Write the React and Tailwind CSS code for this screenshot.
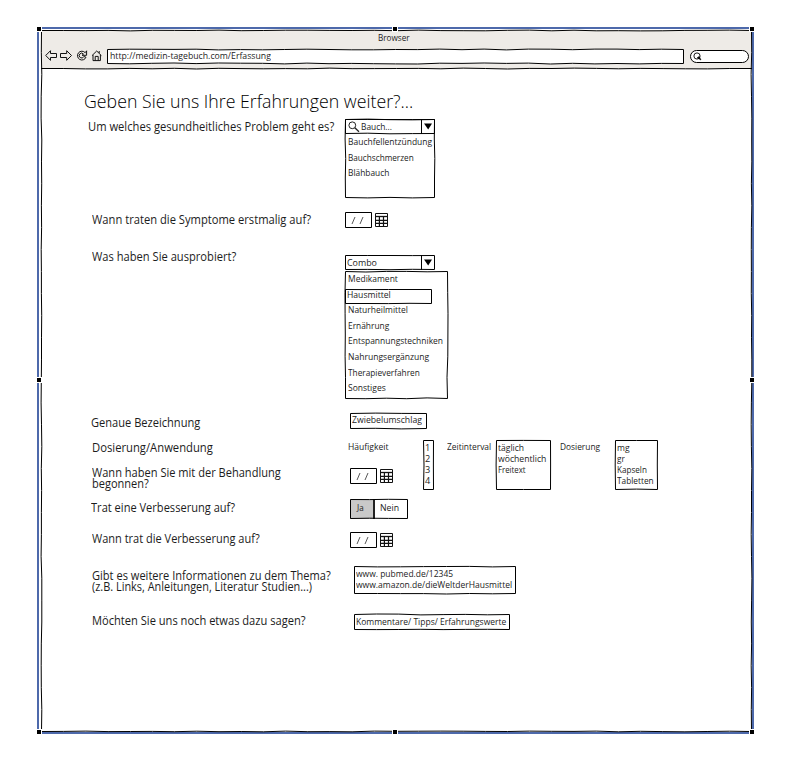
import React, { useLayoutEffect, useRef, useState } from "react";

/* Text condensed or widened so that it fills the width w. */
function T({ w, className = "", children }) {
  const ref = useRef(null);
  const [scale, setScale] = useState(1);
  useLayoutEffect(() => {
    setScale(w / ref.current.offsetWidth);
  }, []);
  return (
    <div className={`whitespace-pre ${className}`}>
      <span ref={ref} className="inline-block origin-left" style={{ transform: `scaleX(${scale})`, marginRight: w - w / scale }}>{children}</span>
    </div>
  );
}

function makeRandom(seed) {
  let s = seed * 7919 + 13;
  return () => {
    s = (s * 16807) % 2147483647;
    return s / 2147483647;
  };
}

function wobble(x1, y1, x2, y2, rnd, amp) {
  const len = Math.hypot(x2 - x1, y2 - y1);
  const n = Math.max(1, Math.round(len / 22));
  const vertical = x1 === x2;
  let d = `M${x1} ${y1}`;
  for (let i = 1; i <= n; i++) {
    const o = i === n ? 0 : (rnd() - 0.5) * 2 * amp;
    const x = x1 + ((x2 - x1) * i) / n + (vertical ? o : 0);
    const y = y1 + ((y2 - y1) * i) / n + (vertical ? 0 : o);
    d += `L${x.toFixed(1)} ${y.toFixed(1)}`;
  }
  return d;
}

/* Hand-drawn outline laid over its parent box. */
function Sketch({ w, h, seed = 1, amp = 0.6 }) {
  const r = makeRandom(seed);
  const a = 0.5;
  const d = [
    wobble(a, a, w - a, a, r, amp),
    wobble(w - a, a, w - a, h - a, r, amp),
    wobble(a, h - a, w - a, h - a, r, amp),
    wobble(a, a, a, h - a, r, amp),
  ].join("");
  return (
    <svg className="pointer-events-none absolute left-0 top-0 overflow-visible" width={w} height={h} fill="none" stroke="#000" strokeWidth="1">
      <path d={d} />
    </svg>
  );
}

function Calendar() {
  return (
    <svg width="13" height="14" viewBox="0 0 13 14" fill="none" stroke="#111">
      <path d="M0.5 13.5V0.5H12.5M0.5 13.5H12.5V0.5" />
      <path d="M0.5 3.5H12.5" strokeWidth="1.3" />
      <path d="M0.5 7.3H12.5M0.5 10.4H12.5M4.4 3.5V13.5M8.5 3.5V13.5" strokeWidth="1.2" />
    </svg>
  );
}

function DateField({ seed }) {
  return (
    <div className="flex items-center gap-[3px]">
      <div className="relative flex h-4 w-[27px] items-center justify-center pr-[2px]">
        <svg width="13" height="9" fill="none" stroke="#444" strokeWidth="0.9">
          <path d="M1 8L4 1M9 8L12 1" />
        </svg>
        <Sketch w={27} h={16} seed={seed} amp={0.3} />
      </div>
      <Calendar />
    </div>
  );
}

function Arrow() {
  return (
    <div className="flex h-full w-[14px] items-center justify-center border-l border-black pr-px">
      <svg width="8" height="7"><path d="M0 0.5H8L4.2 6.5Z" fill="#000" /></svg>
    </div>
  );
}

const small = "text-[9.2px] leading-[11px]";
const label = "text-[12px] leading-[11px]";

function Handle({ className }) {
  return <div className={`absolute size-[6px] border border-white bg-black ${className}`} />;
}

function Header() {
  return (
    <div className="relative flex h-[39px] flex-col bg-[#eeebe7]">
      <div className={`flex h-[19px] justify-center pt-[2px] ${small}`}>
        <T w={32} className="pr-[6px]">Browser</T>
      </div>
      <div className="flex h-[15px] items-center pl-[4px]">
        <svg width="58" height="13" viewBox="0 0 58 13" fill="none" stroke="#111" strokeWidth="1">
          <path d="M0.7 5.5L5.5 0.7V3.5H11.5V7.5H5.5V10.3Z" />
          <path d="M26.5 5.5L21.7 0.7V3.5H15.5V7.5H21.7V10.3Z" />
          <path d="M40.2 2.7A4.4 4.4 0 1 0 41 7.2L38.8 6.5A2.4 2.4 0 1 1 38.5 4.1L37 5.3H41.6V0.8Z" />
          <path d="M47 5.6L51.7 1L56.4 5.6M48 5V10.6H55.4V5M50.2 10.6V6.4H53.2V10.6M54.2 1V3" />
        </svg>
        <div className={`relative ml-[4px] flex h-[15px] w-[577px] items-center bg-white pb-[3px] pl-[3px] ${small}`}>
          <T w={161}>http://medizin-tagebuch.com/Erfassung</T>
          <Sketch w={577} h={15} seed={4} amp={0.5} />
        </div>
        <div className="ml-[6px] flex h-[13px] w-[59px] items-center rounded-full border border-black bg-white pl-[2px]">
          <svg width="9" height="9" fill="none" stroke="#000">
            <circle cx="4" cy="4" r="3.1" strokeWidth="0.9" />
            <path d="M4.2 5.8L6.2 4.5L8 8Z" fill="#000" strokeWidth="0.6" />
          </svg>
        </div>
      </div>
      <svg className="absolute left-0 top-[37px] overflow-visible" width="711" height="3" fill="none" stroke="#000">
        <path d={wobble(0, 1.5, 711, 1.5, makeRandom(8), 0.5)} />
      </svg>
    </div>
  );
}

function Choices({ width, box, items, seed }) {
  return (
    <div className={`relative h-[50px] pl-[2px] pt-[2px] ${box} ${small}`}>
      {items.map(([t, w]) => <T key={t} w={w}>{t}</T>)}
      <Sketch w={width} h={50} seed={seed} amp={0.5} />
    </div>
  );
}

const methods = [
  ["Naturheilmittel", 60], ["Ernährung", 41], ["Entspannungstechniken", 95],
  ["Nahrungsergänzung", 81], ["Therapieverfahren", 72], ["Sonstiges", 38],
];

export default function App() {
  return (
    <div className="h-[762px] w-[791px] overflow-hidden bg-white pl-[37px] pt-[27px] font-['Open_Sans','Noto_Sans',sans-serif] text-[#1c1c1c]">
      <div className="relative h-[707px] w-[717px] border-2 border-[#4d69ab] pl-[2px] pt-px">
        <div className="relative h-[702px] w-[711px]">
          <Header />
          <div className="pl-[43px] pt-[22px]">
            <T w={329} className="h-[28px] text-[18.5px] font-light leading-[20px] text-black">Geben Sie uns Ihre Erfahrungen weiter?...</T>

            <div className="flex h-[93px]">
              <div className={`w-[261px] pl-[4px] pt-[2px] ${label}`}>
                <T w={246}>Um welches gesundheitliches Problem geht es?</T>
              </div>
              <div className={`relative h-[79px] w-[90px] ${small}`}>
                <div className="relative flex h-[15px] items-center">
                  <svg className="ml-[3px]" width="12" height="12" fill="none" stroke="#222">
                    <circle cx="4.3" cy="4.3" r="3.4" />
                    <path d="M6.8 6.8L11 10.8" strokeWidth="1.3" />
                  </svg>
                  <T w={31} className="grow pl-[1px]">Bauch...</T>
                  <Arrow />
                  <Sketch w={90} h={15} seed={3} amp={0.4} />
                </div>
                <div className="flex flex-col gap-[4.6px] pl-[3px] pt-[2px]">
                  <T w={84}>Bauchfellentzündung</T>
                  <T w={66}>Bauchschmerzen</T>
                  <T w={41}>Blähbauch</T>
                </div>
                <Sketch w={90} h={79} seed={6} amp={0.5} />
              </div>
            </div>

            <div className="flex h-[37px]">
              <div className={`w-[261px] pl-[8px] pt-[2px] ${label}`}>
                <T w={219}>Wann traten die Symptome erstmalig auf?</T>
              </div>
              <div><DateField seed={2} /></div>
            </div>

            <div className="flex h-[164px]">
              <div className={`w-[261px] pl-[8px] pt-[2px] ${label}`}>
                <T w={144}>Was haben Sie ausprobiert?</T>
              </div>
              <div className={`pt-[6px] ${small}`}>
                <div className="relative flex h-[15px] w-[90px] items-center">
                  <T w={30} className="grow pb-px pl-[2px]">Combo</T>
                  <Arrow />
                  <Sketch w={90} h={15} seed={9} amp={0.4} />
                </div>
                <div className="relative mt-px h-[128px] w-[103px]">
                  <T w={50} className="h-[18px] pl-[3px] pt-[2px]">Medikament</T>
                  <div className="relative h-[15px] w-[87px] pl-[2px]">
                    <T w={44}>Hausmittel</T>
                    <Sketch w={87} h={15} seed={12} amp={0.3} />
                  </div>
                  <div className="flex flex-col gap-[4.7px] pl-[3px]">
                    {methods.map(([t, w]) => <T key={t} w={w}>{t}</T>)}
                  </div>
                  <Sketch w={103} h={128} seed={15} amp={0.6} />
                </div>
              </div>
            </div>

            <div className="flex h-[27px]">
              <div className={`w-[266px] pl-[7px] pt-[4px] ${label}`}>
                <T w={109}>Genaue Bezeichnung</T>
              </div>
              <div className={`relative h-4 w-[77px] pl-[2px] pt-[1px] ${small}`}>
                <T w={70}>Zwiebelumschlag</T>
                <Sketch w={77} h={16} seed={18} amp={0.5} />
              </div>
            </div>

            <div className="flex h-[59px]">
              <div className={`w-[264px] pl-[8px] pt-[2px] ${label}`}>
                <T w={121}>Dosierung/Anwendung</T>
                <T w={189} className="mt-[14px]">Wann haben Sie mit der Behandlung</T>
                <T w={57}>begonnen?</T>
              </div>
              <div className="w-[75px] pt-[1px]">
                <T w={41} className={small}>Häufigkeit</T>
                <div className="pl-[2px] pt-[16px]"><DateField seed={21} /></div>
              </div>
              <Choices width={11} box="w-[24px]" seed={22} items={[["1", 5], ["2", 5], ["3", 5], ["4", 5]]} />
              <T w={44} className={`w-[49px] pt-[1px] ${small}`}>Zeitinterval</T>
              <Choices width={55} box="w-[64px]" seed={23} items={[["täglich", 26], ["wöchentlich", 48], ["Freitext", 28]]} />
              <T w={40} className={`w-[55px] pt-[1px] ${small}`}>Dosierung</T>
              <Choices width={43} box="w-[43px]" seed={24} items={[["mg", 13], ["gr", 8], ["Kapseln", 30], ["Tabletten", 37]]} />
            </div>

            <div className="flex h-[33px]">
              <div className={`w-[266px] pl-[7px] pt-[3px] ${label}`}>
                <T w={144}>Trat eine Verbesserung auf?</T>
              </div>
              <div className={`relative flex h-5 w-[58px] ${small}`}>
                <div className="w-[25px] border-r-2 border-[#222] bg-[#c9c9c9] pl-[7px] pt-[3px]"><T w={7}>Ja</T></div>
                <div className="pl-[5px] pt-[3px]"><T w={19}>Nein</T></div>
                <Sketch w={58} h={20} seed={27} amp={0.4} />
              </div>
            </div>

            <div className="flex h-[34px]">
              <div className={`w-[266px] pl-[8px] pt-px ${label}`}>
                <T w={168}>Wann trat die Verbesserung auf?</T>
              </div>
              <div><DateField seed={29} /></div>
            </div>

            <div className="flex h-[48px]">
              <div className={`w-[270px] pl-[8px] pt-[4px] ${label}`}>
                <T w={239}>Gibt es weitere Informationen zu dem Thema?</T>
                <T w={220}>(z.B. Links, Anleitungen, Literatur Studien...)</T>
              </div>
              <div className={`relative h-[28px] w-[162px] pl-[2px] pt-[2px] ${small}`}>
                <T w={97}>www. pubmed.de/12345</T>
                <T w={156}>www.amazon.de/dieWeltderHausmittel</T>
                <Sketch w={162} h={28} seed={31} amp={0.5} />
              </div>
            </div>

            <div className="flex h-[20px]">
              <div className={`w-[270px] pl-[8px] pt-px ${label}`}>
                <T w={214}>Möchten Sie uns noch etwas dazu sagen?</T>
              </div>
              <div className={`relative h-[16px] w-[156px] pl-[2px] pt-[2px] ${small}`}>
                <T w={150}>Kommentare/ Tipps/ Erfahrungswerte</T>
                <Sketch w={156} h={16} seed={33} amp={0.5} />
              </div>
            </div>
          </div>
          <div className="absolute inset-0"><Sketch w={711} h={702} seed={40} amp={0.4} /></div>
        </div>
        <Handle className="-left-[3px] -top-[3px]" />
        <Handle className="left-[353px] -top-[3px]" />
        <Handle className="-right-[3px] -top-[3px]" />
        <Handle className="-left-[3px] top-[348px]" />
        <Handle className="-right-[3px] top-[348px]" />
        <Handle className="-bottom-[3px] -left-[3px]" />
        <Handle className="-bottom-[3px] left-[353px]" />
        <Handle className="-bottom-[3px] -right-[3px]" />
      </div>
    </div>
  );
}
